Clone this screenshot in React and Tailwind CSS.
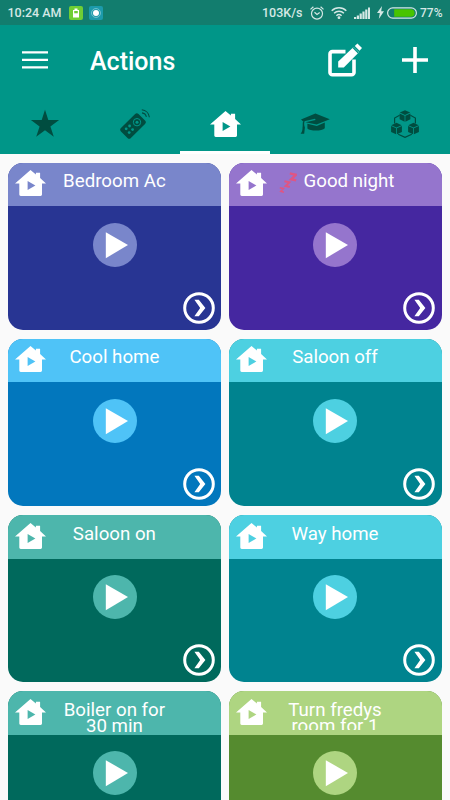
import React, { useState } from 'react';

const TABS = [
  { id: 'favorites', Icon: StarIcon },
  { id: 'remotes', Icon: RemoteIcon },
  { id: 'actions', Icon: HouseTabIcon },
  { id: 'learn', Icon: GraduationIcon },
  { id: 'modules', Icon: CubesIcon },
];

const ACTIONS = [
  { name: 'Bedroom Ac', light: 'bg-[#7986cb]', dark: 'bg-[#283593]', tint: 'text-[#7986cb]' },
  { name: 'Good night', light: 'bg-[#9575cd]', dark: 'bg-[#4527a0]', tint: 'text-[#9575cd]', sleep: true },
  { name: 'Cool home', light: 'bg-[#4fc3f7]', dark: 'bg-[#0277bd]', tint: 'text-[#4fc3f7]' },
  { name: 'Saloon off', light: 'bg-[#4dd0e1]', dark: 'bg-[#00838f]', tint: 'text-[#4dd0e1]' },
  { name: 'Saloon on', light: 'bg-[#4db6ac]', dark: 'bg-[#00695c]', tint: 'text-[#4db6ac]' },
  { name: 'Way home', light: 'bg-[#4dd0e1]', dark: 'bg-[#00838f]', tint: 'text-[#4dd0e1]' },
  { name: 'Boiler on for 30 min', light: 'bg-[#4db6ac]', dark: 'bg-[#00695c]', tint: 'text-[#4db6ac]' },
  { name: 'Turn fredys room for 1', light: 'bg-[#aed581]', dark: 'bg-[#558b2f]', tint: 'text-[#aed581]', clipped: true },
];

function StarIcon() {
  return (
    <svg viewBox="0 0 30 30" className="w-[30px] h-[30px]" fill="#004d40">
      <path d="M15 .8l3.3 10.2h10.8l-8.7 6.4 3.4 10.3-8.8-6.4-8.8 6.4 3.4-10.3L.9 11h10.8z" />
    </svg>
  );
}

function RemoteIcon() {
  return (
    <svg viewBox="0 0 30 30" className="w-[30px] h-[30px]">
      <rect x="6" y="4.6" width="14" height="24.8" rx="2.4" fill="#004d40" transform="rotate(45 13 17)" />
      <circle cx="17" cy="13.2" r="3.7" fill="none" stroke="#009688" strokeWidth="1" />
      <circle cx="17" cy="13.2" r="1.5" fill="#009688" />
      <g fill="#009688">
        <circle cx="6.2" cy="19.8" r="1.4" />
        <circle cx="9.6" cy="17" r="1.4" />
        <circle cx="12.6" cy="20.6" r="1.4" />
        <circle cx="9.2" cy="23.6" r="1.4" />
      </g>
      <path d="M22 3.9a5.2 5.2 0 0 1 4.4 4M21.8.8a8.6 8.6 0 0 1 7.6 7.4" fill="none" stroke="#004d40" strokeWidth="1.1" />
    </svg>
  );
}

function HouseIcon({ className }) {
  return (
    <svg viewBox="0 0 31 26" className={className}>
      <path d="M15.5 0l5.4 4.5V2.8h4.2v5.3l5.9 5.5h-4v11a1.4 1.4 0 0 1-1.4 1.4H5.7a1.4 1.4 0 0 1-1.4-1.4v-11H0z" fill="#fff" />
      <path d="M12.6 10.9v9l7.8-4.5z" fill="currentColor" />
    </svg>
  );
}

function HouseTabIcon() {
  return <HouseIcon className="w-[31px] h-[26px] text-[#009688]" />;
}

function GraduationIcon() {
  return (
    <svg viewBox="0 0 30 22" className="w-[30px] h-[22px]" fill="#004d40">
      <path d="M15.4.6L29.8 6.2 16.6 11.6 5.6 9.2 15.6 6.9 15 5.8 3.2 8.6 1 6.4z" />
      <path d="M7.4 10.8l9.4 2.2 8-3.4v5.6c-2.6 3-14.6 3.2-17.4.2z" />
      <path d="M3 8.4l1.6-.6c-.7 3-.5 4.4.3 6.6l-.7 6.4H.6c1.6-2 2-4 1.9-6.2.5-2-.1-3.8.5-6.2z" />
    </svg>
  );
}

function Cube({ x, y }) {
  return (
    <g transform={`translate(${x} ${y})`} fill="#004d40">
      <path d="M5.4 0L10.6 2.4 5.4 4.8.2 2.4z" />
      <path d="M0 3.2l5 2.3v6L0 9.1zM10.8 3.2l-5 2.3v6l5-2.4z" />
    </g>
  );
}

function CubesIcon() {
  return (
    <svg viewBox="0 0 28 28" className="w-7 h-7">
      <path d="M8.6 5.2L3.6 8v5.4M19.4 5.2l5 2.8v5.4M7.2 24.2l6.8 3.2 6.8-3.2" fill="none" stroke="#004d40" strokeWidth="1.2" />
      <Cube x={8.6} y={0.2} />
      <Cube x={0.1} y={12.8} />
      <Cube x={17.1} y={12.8} />
    </svg>
  );
}

function StatusBar() {
  return (
    <div className="h-[25px] bg-[#127d6e] flex items-center text-[#d5e8e5] text-[12.5px] leading-none font-medium pl-[7.5px] pr-2">
      <span className="w-[61px] pt-px whitespace-nowrap">10:24 AM</span>
      <svg viewBox="0 0 14 14" className="w-3.5 h-3.5">
        <rect width="14" height="14" rx="2" fill="#6fce35" />
        <path d="M5.5 2.5h3V4H10v7.5H4V4h1.5z" fill="#fff" />
        <path d="M5.2 5h3.6v2.3H5.2z" fill="#6fce35" />
      </svg>
      <svg viewBox="0 0 14 14" className="w-3.5 h-3.5 ml-1.5">
        <rect width="14" height="14" rx="2" fill="#1c9aab" />
        <circle cx="7" cy="7" r="4.5" fill="none" stroke="#83c8d2" strokeWidth=".8" />
        <circle cx="7" cy="7" r="3" fill="#fff" />
      </svg>
      <span className="ml-auto pt-px whitespace-nowrap">103K/s</span>
      {/* Alarm */}
      <svg viewBox="0 0 14 14" className="w-3.5 h-3.5 ml-[7px]" fill="none" stroke="currentColor" strokeWidth="1.2">
        <circle cx="7" cy="7.6" r="5.5" />
        <path d="M4.5 6.2L7 8.4l2.7-2M.5 3.4L3.4.8M13.5 3.4L10.6.8" />
      </svg>
      {/* Wifi */}
      <svg viewBox="0 0 16 13" className="w-4 h-[13px] ml-[7px]" fill="none" stroke="currentColor" strokeWidth="1.5">
        <path d="M.7 4.7a10.5 10.5 0 0 1 14.6 0M3.1 7.3a7 7 0 0 1 9.8 0M5.4 9.7a3.8 3.8 0 0 1 5.2 0" />
        <circle cx="8" cy="11.6" r=".7" fill="currentColor" />
      </svg>
      {/* Signal */}
      <svg viewBox="0 0 16 12" className="w-4 h-3 ml-[7px]" fill="currentColor">
        <path d="M0 10h2.2v2H0zM2.8 8.5H5V12H2.8zM5.6 6.5h2.2V12H5.6zM8.4 4.5h2.2V12H8.4zM11.2 2.5h2.2V12h-2.2zM14 .5h2V12h-2z" />
      </svg>
      <svg viewBox="0 0 7 13" className="w-[7px] h-[13px] ml-[7px]" fill="currentColor">
        <path d="M5 0L0 7h2.8L1.8 13 7 5.3H4.2z" />
      </svg>
      <svg viewBox="0 0 30 12" className="w-[30px] h-3 ml-[3px]">
        <rect x=".6" y=".9" width="28.8" height="10.2" rx="5.1" fill="none" stroke="currentColor" strokeWidth="1.2" />
        <path d="M7.2 2.2h16.6a3.8 3.8 0 0 1 0 7.6H7.2z" fill="#48c400" />
      </svg>
      <span className="ml-[3.5px] pt-px w-[22px] whitespace-nowrap text-xs">77%</span>
    </div>
  );
}

function AppBar() {
  return (
    <div className="h-[70px] flex items-center pl-[22px] pr-[22px] text-white">
      <button aria-label="Menu">
        <svg viewBox="0 0 26 20" className="w-[26px] h-5" fill="#fff">
          <path d="M0 1.2h26v2.4H0zM0 8.7h26v2.4H0zM0 16.2h26v2.4H0z" />
        </svg>
      </button>
      <h1 className="ml-[42px] pt-0.5 text-[25px] leading-none font-medium">Actions</h1>
      <button aria-label="Edit" className="ml-auto">
        <svg viewBox="0 0 34 34" className="w-[34px] h-[34px]">
          <path d="M17.5 8.6H4.4a2.4 2.4 0 0 0-2.4 2.4v18.4a2.4 2.4 0 0 0 2.4 2.4h19.2a2.4 2.4 0 0 0 2.4-2.4V16.5" fill="none" stroke="#fff" strokeWidth="3.6" />
          <path d="M10.2 24.4v-5.8L25.6 4l5.4 5.3-15.2 15.1z" fill="#fff" />
          <path d="M25 4.6l5.4 5.4" stroke="#009688" strokeWidth="1.4" />
          <path d="M26.8 3L29.4.5l4.6 4.6-2.5 2.6z" fill="#fff" />
        </svg>
      </button>
      <button aria-label="Add" className="ml-10">
        <svg viewBox="0 0 26 26" className="w-[26px] h-[26px]" fill="#fff">
          <path d="M11.2 0h3.6v11.2H26v3.6H14.8V26h-3.6V14.8H0v-3.6h11.2z" />
        </svg>
      </button>
    </div>
  );
}

function SleepIcon() {
  return (
    <svg viewBox="0 0 18 22" className="w-[18px] h-[22px] -mt-[2.5px] shrink-0" fill="none" stroke="#df5584">
      <path d="M10.8 1.4l6 1.4-4.6 4.4 5 1.2" strokeWidth="2.5" />
      <path d="M5.4 9.2l5 1.2-3.8 3.6 4.2 1" strokeWidth="2" />
      <path d="M.8 15.8l3.6.8-2.6 2.8 3.2.8" strokeWidth="1.6" />
    </svg>
  );
}

function ActionCard({ action }) {
  return (
    <div className={`h-[167.3px] rounded-[15px] overflow-hidden flex flex-col ${action.dark}`}>
      <div className={`h-[43.6px] shrink-0 flex pl-[6.5px] ${action.light}`}>
        <HouseIcon className={`w-[31px] h-[26px] mt-[7.5px] shrink-0 ${action.tint}`} />
        <div
          className={`mt-[6.5px] pt-[5.2px] w-[122px] flex justify-center text-center text-white text-[18.7px] leading-[15.5px] ${
            action.sleep ? 'ml-[9px]' : 'ml-[7.5px]'
          } ${action.clipped ? 'h-[32px] overflow-hidden' : 'h-[37px]'}`}
        >
          {action.sleep && <SleepIcon />}
          <span className={action.sleep ? 'ml-[7px] whitespace-nowrap' : ''}>{action.name}</span>
        </div>
      </div>
      <div className="flex-1 flex flex-col justify-between px-[6.5px] pt-[16.5px] pb-[6px]">
        <button aria-label={`Run ${action.name}`} className="self-center">
          <svg viewBox="0 0 44 44" className={`w-11 h-11 ${action.tint}`}>
            <circle cx="22" cy="22" r="22" fill="currentColor" />
            <path d="M12.8 9.2v26L35 22z" fill="#fff" />
          </svg>
        </button>
        <button aria-label={`Open ${action.name}`} className="self-end">
          <svg viewBox="0 0 32 32" className="w-8 h-8">
            <circle cx="16" cy="16" r="14.3" fill="none" stroke="#fff" strokeWidth="3" />
            <path d="M11.4 7.8h4.4l6.6 8.2-6.6 8.2h-4.4l5.8-8.2z" fill="#fff" />
          </svg>
        </button>
      </div>
    </div>
  );
}

export default function App() {
  const [activeTab, setActiveTab] = useState('actions');

  return (
    <div className="w-[450px] h-[800px] overflow-hidden bg-[#fafafa] font-[Roboto,sans-serif]">
      <header className="bg-[#009688]">
        <StatusBar />
        <AppBar />
        <nav className="grid grid-cols-5 h-[58.5px]">
          {TABS.map(({ id, Icon }) => (
            <button
              key={id}
              onClick={() => setActiveTab(id)}
              className={`flex items-center justify-center pt-0.5 border-b-[3px] ${
                activeTab === id ? 'border-white' : 'border-transparent'
              }`}
            >
              <Icon />
            </button>
          ))}
        </nav>
      </header>

      <main className="grid grid-cols-2 gap-x-2 gap-y-[9px] pt-[9px] px-[8.4px]">
        {ACTIONS.map(action => (
          <ActionCard key={action.name} action={action} />
        ))}
      </main>
    </div>
  );
}
